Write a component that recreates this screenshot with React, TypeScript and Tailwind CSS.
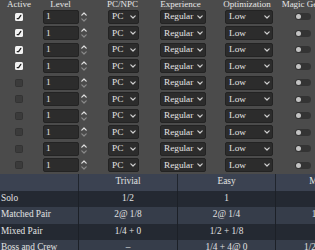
import React from 'react';

const serif = "font-['Liberation_Serif','Times_New_Roman',serif]";

const Chevron = ({ className }: { className?: string }) => (
  <svg width="6" height="4" viewBox="0 0 6 4" className={className}>
    <path d="M0.8 0.8 L3 3 L5.2 0.8" fill="none" stroke="currentColor" strokeWidth="1.2" strokeLinecap="round" strokeLinejoin="round" />
  </svg>
);

const Checkbox = ({ checked }: { checked: boolean }) =>
  checked ? (
    <div className="w-[8px] h-[8px] rounded-[1.5px] bg-[#f2f2f2] flex items-center justify-center">
      <svg width="8" height="8" viewBox="0 0 8 8">
        <path d="M2.2 5.6 L3.6 5.6 L5.8 2.4" fill="none" stroke="#222" strokeWidth="1.3" strokeLinecap="round" />
      </svg>
    </div>
  ) : (
    <div className="w-[8px] h-[8px] rounded-[1.5px] bg-[#3b3b3b] border border-[#333]" />
  );

const Select = ({ value, width }: { value: string; width: string }) => (
  <div className={`${width} h-[14px] bg-[#2c2c2c] border border-[#232323] rounded-[2px] flex items-center justify-between pl-[3px] pr-[2px]`}>
    <span className="text-[9.25px] leading-none text-[#e4e4e4]">{value}</span>
    <Chevron className="text-[#d0d0d0]" />
  </div>
);

const rows = [true, true, true, true, false, false, false, false, false, false];

const tableRows = [
  { label: 'Solo', values: ['1/2', '1', '2'] },
  { label: 'Matched Pair', values: ['2@ 1/8', '2@ 1/4', '1 + 1/4'] },
  { label: 'Mixed Pair', values: ['1/4 + 0', '1/2 + 1/8', '1 + 0'] },
  { label: 'Boss and Crew', values: ['–', '1/4 + 4@ 0', '1/2 + 4@ 0'] },
];

export default function App() {
  return (
    <div className={`w-[315px] h-[250px] overflow-hidden bg-[#4b4b4b] text-[#e6e6e6] ${serif}`}>
      <div className="flex h-[8.5px] text-[9px] leading-[8.5px] whitespace-nowrap">
        <div className="w-[38px] shrink-0 text-center">Active</div>
        <div className="w-[62px] shrink-0 pl-[4px]">
          <div className="w-[37px] text-center">Level</div>
        </div>
        <div className="w-[45px] shrink-0 text-center">PC/NPC</div>
        <div className="w-[71px] shrink-0 text-center">Experience</div>
        <div className="w-[62px] shrink-0 text-center">Optimization</div>
        <div className="w-[50px] shrink-0 text-center">Magic Gear</div>
      </div>

      {rows.map((checked, i) => (
        <div key={i} className="flex items-center h-[16.5px]">
          <div className="w-[38px] shrink-0 flex justify-center">
            <Checkbox checked={checked} />
          </div>
          <div className="w-[62px] shrink-0 flex items-center pl-[5px]">
            <div className="w-[36px] h-[14px] bg-[#2c2c2c] border border-[#232323] rounded-[2px] flex items-center pl-[2px]">
              <span className="text-[9.25px] leading-none">1</span>
            </div>
            <div className="w-[9px] h-[14px] flex flex-col items-center justify-between py-[2px] pl-[1px]">
              <Chevron className="text-[#e0e0e0] rotate-180" />
              <Chevron className="text-[#8a8a8a]" />
            </div>
          </div>
          <div className="w-[45px] shrink-0 pl-[8px]">
            <Select value="PC" width="w-[31px]" />
          </div>
          <div className="w-[71px] shrink-0 pl-[15px]">
            <Select value="Regular" width="w-[46px]" />
          </div>
          <div className="w-[62px] shrink-0 pl-[9px]">
            <Select value="Low" width="w-[48px]" />
          </div>
          <div className="w-[50px] shrink-0 pl-[17px]">
            <div className="w-[16px] h-[7px] rounded-full bg-[#343434] flex items-center pl-[1px]">
              <div className="w-[5px] h-[5px] rounded-full bg-[#c4c4c4]" />
            </div>
          </div>
        </div>
      ))}

      <div className="text-[9.3px] text-[#e2e2e2] whitespace-nowrap">
        <div className="flex h-[17.5px] items-center bg-[#3b4251]">
          <div className="w-[79px] shrink-0 h-full border-r border-[#20252d]" />
          <div className="w-[99px] shrink-0 h-full flex items-center justify-center border-r border-[#20252d]">Trivial</div>
          <div className="w-[98px] shrink-0 h-full flex items-center justify-center border-r border-[#20252d]">Easy</div>
          <div className="w-[98px] shrink-0 h-full flex items-center justify-center">Medium</div>
        </div>
        {tableRows.map((r, i) => (
          <div key={r.label} className={`flex h-[16.3px] ${i % 2 === 0 ? 'bg-[#242932]' : 'bg-[#363d4a]'}`}>
            <div className="w-[79px] shrink-0 h-full flex items-center pl-[1px] border-r border-[#1c2027]">{r.label}</div>
            <div className="w-[99px] shrink-0 h-full flex items-center justify-center border-r border-[#1c2027]">{r.values[0]}</div>
            <div className="w-[98px] shrink-0 h-full flex items-center justify-center border-r border-[#1c2027]">{r.values[1]}</div>
            <div className="w-[98px] shrink-0 h-full flex items-center justify-center">{r.values[2]}</div>
          </div>
        ))}
      </div>
    </div>
  );
}
